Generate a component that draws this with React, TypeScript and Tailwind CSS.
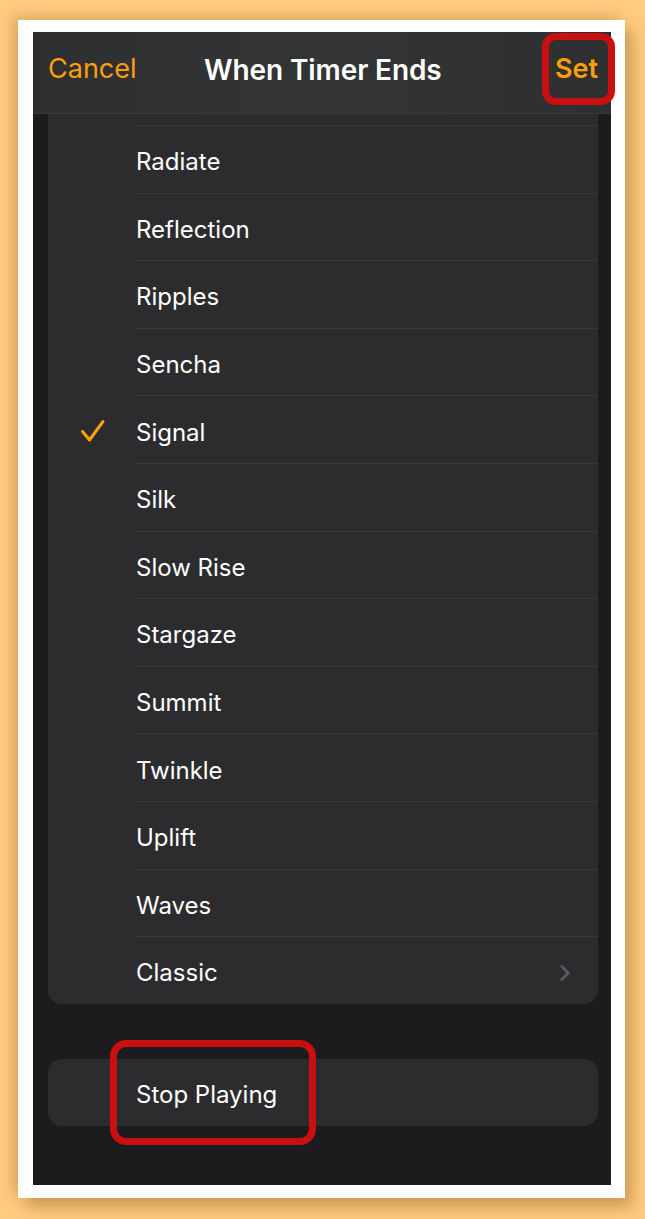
import { ChevronRight } from "lucide-react";

const TONES = [
  "Radiate",
  "Reflection",
  "Ripples",
  "Sencha",
  "Signal",
  "Silk",
  "Slow Rise",
  "Stargaze",
  "Summit",
  "Twinkle",
  "Uplift",
  "Waves",
];

const SELECTED = "Signal";

function Check() {
  return (
    <svg width="26" height="24" viewBox="0 0 26 24" fill="none">
      <path
        d="M2.5 12.5 L9.5 21 L23 2.5"
        stroke="#FF9F0A"
        strokeWidth="3"
        strokeLinecap="round"
        strokeLinejoin="round"
      />
    </svg>
  );
}

function ToneRow({ name }: { name: string }) {
  return (
    <div className="relative flex h-[67.6px] items-center pl-[88px] pt-[5px]">
      {name === SELECTED && (
        <span className="absolute left-[32px] top-[23px]">
          <Check />
        </span>
      )}
      <span className="text-[24px] text-white">{name}</span>
      <div className="absolute bottom-0 left-[88px] right-0 h-px bg-[#3a3a3c]" />
    </div>
  );
}

export default function App() {
  return (
    <div
      className="h-[1219px] w-[645px] overflow-hidden bg-[#FFCB7F] pl-[18px] pt-[20px]"
      style={{ fontFamily: "Inter, 'Noto Sans', sans-serif" }}
    >
      <div className="relative h-[1178px] w-[607px] bg-white pb-[13px] pl-[15px] pr-[14px] pt-[12px] shadow-[8px_10px_14px_rgba(120,80,20,0.35),-6px_-4px_12px_rgba(120,80,20,0.25)]">
        <div className="relative flex h-[1153px] w-[578px] flex-col overflow-hidden bg-[#1c1c1e]">
          {/* Header */}
          <div className="relative z-10 flex h-[81px] shrink-0 items-center justify-between bg-gradient-to-r from-[#2e2f31] via-[#333436] to-[#2e2f31] pb-[6px] pl-[15px] pr-[13px] shadow-[0_1px_0_#3a3a3c]">
            <span className="text-[27px] text-[#FF9F0A]">Cancel</span>
            <span className="absolute left-[171px] text-[28px] font-semibold tracking-[-0.1px] text-white">
              When Timer Ends
            </span>
            <span className="text-[27px] font-semibold text-[#FF9F0A]">Set</span>
          </div>

          {/* Tone list */}
          <div className="flex-1 overflow-hidden pl-[15px] pr-[13px]">
            <div className="-mt-[54.6px] rounded-b-[14px] bg-[#2c2c2e]">
              <div className="relative h-[67.6px]">
                <div className="absolute bottom-0 left-[88px] right-0 h-px bg-[#3a3a3c]" />
              </div>
              {TONES.map((t) => (
                <ToneRow key={t} name={t} />
              ))}
              <div className="flex h-[67px] items-center justify-between pl-[88px] pr-[20px] pt-[5px]">
                <span className="text-[24px] text-white">Classic</span>
                <ChevronRight size={26} strokeWidth={2.6} color="#5b5b5f" />
              </div>
            </div>

            <div className="mt-[55px] flex h-[67px] items-center rounded-[14px] bg-[#2c2c2e] pl-[88px] pt-[5px]">
              <span className="text-[24px] text-white">Stop Playing</span>
            </div>
          </div>
        </div>

        {/* Annotations */}
        <div className="absolute left-[524px] top-[13px] z-20 h-[72px] w-[73px] rounded-[14px] border-[7px] border-[#C90F0F]" />
        <div className="absolute left-[92px] top-[1020px] z-20 h-[105px] w-[206px] rounded-[16px] border-[7px] border-[#C90F0F]" />
      </div>
    </div>
  );
}
